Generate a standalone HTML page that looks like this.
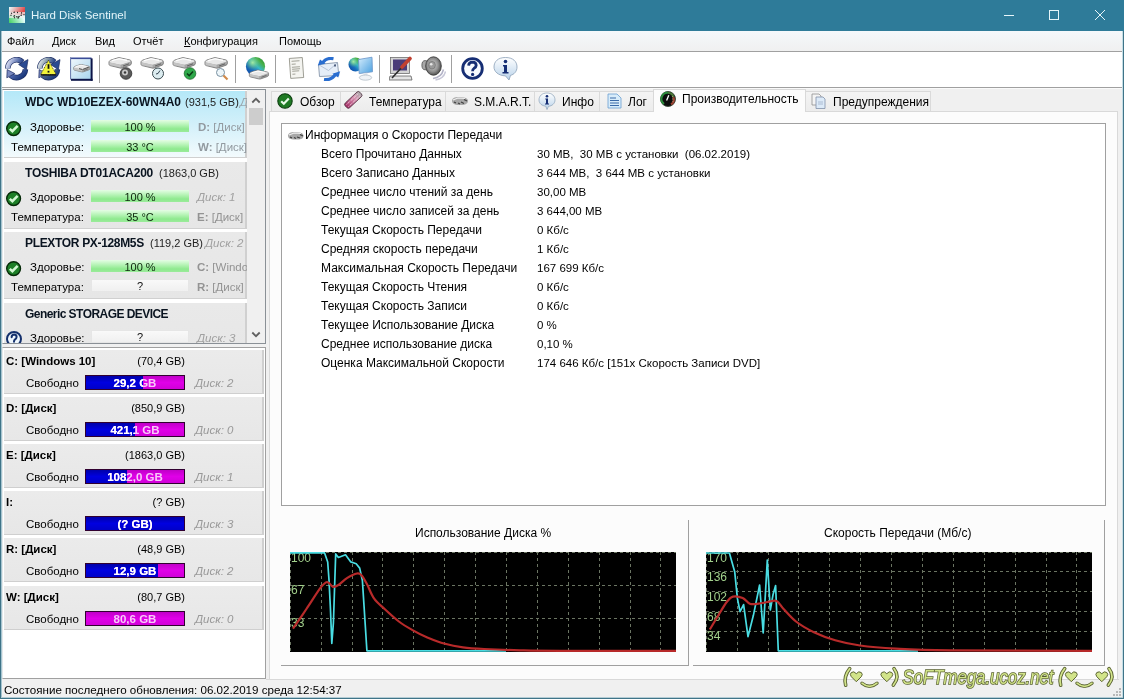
<!DOCTYPE html><html><head><meta charset="utf-8"><style>
*{margin:0;padding:0;box-sizing:border-box}
html,body{width:1124px;height:699px;overflow:hidden;background:#f0f0f0;-webkit-font-smoothing:antialiased;font-family:"Liberation Sans",sans-serif;font-size:12px;color:#000}
.a{position:absolute}
.t{position:absolute;white-space:nowrap;line-height:14px}
.g{color:#a2a2a2}
.it{font-style:italic}
.b{font-weight:bold}
.row{position:absolute;left:321px;white-space:nowrap;line-height:14px}
.val{position:absolute;left:537px;white-space:nowrap;line-height:14px;font-size:11.5px}
.di{position:absolute;left:4px;width:243px;height:67px;background:linear-gradient(#e9e9e9,#e6e6e6);box-shadow:inset -2px -1px 0 #d0d0d0}
.pi{position:absolute;left:4px;width:260px;height:44px;background:linear-gradient(#ebebeb,#e7e7e7);box-shadow:inset -2px -1px 0 #cfcfcf}
.hb{position:absolute;left:87px;width:98px;height:12px;background:linear-gradient(#e4fde4 0%,#b6f4b6 40%,#8ee98e 75%,#9beb9b 100%);text-align:center;font-size:11px;line-height:15px;color:#0c260c;overflow:hidden}
.eb{position:absolute;left:87px;width:98px;height:13px;background:linear-gradient(#fafafa,#efefef);box-shadow:inset 0 0 0 1px #e6e6e6;text-align:center;font-size:11px;line-height:15px;color:#111}
.pb{position:absolute;left:81px;top:25px;width:100px;height:15px;background:linear-gradient(#c000c8,#e000e8 50%,#d000d8);border:1px solid #300030;overflow:hidden}
.pbb{position:absolute;left:0;top:0;height:13px;background:linear-gradient(#0000a8,#0000e0 50%,#0000c8)}
.pbt{position:absolute;left:0;top:0;width:98px;height:13px;text-align:center;font-weight:bold;font-size:11.5px;line-height:15px;color:#fff;white-space:nowrap}
.tab{position:absolute;top:91px;height:21px;background:linear-gradient(#f5f5f5,#ececec);border:1px solid #d9d9d9;border-bottom:none}
</style></head><body><div id="root" style="position:absolute;left:0;top:0;width:1124px;height:699px;will-change:transform;background:#f0f0f0">
<div class="a" style="left:0px;top:0px;width:1124px;height:31px;background:#2e7b99;"></div>
<div class="t " style="left:31px;top:8px;font-size:11.5px;color:#e3f5fa">Hard Disk Sentinel</div>
<svg class="a" style="left:990px;top:0" width="134" height="31"><g stroke="#e6f6fa" stroke-width="1" fill="none"><line x1="1004" y1="15.5" x2="1014" y2="15.5" transform="translate(-990,0)"/><rect x="59.5" y="10.5" width="9" height="9"/><line x1="105" y1="10" x2="115" y2="20"/><line x1="115" y1="10" x2="105" y2="20"/></g></svg>
<div class="a" style="left:1px;top:31px;width:1122px;height:20px;background:linear-gradient(#f4f8fb,#f0f0f0);"></div>
<div class="a" style="left:1px;top:51px;width:1122px;height:1px;background:#a0a0a0;"></div>
<div class="t " style="left:7px;top:34px;font-size:11px">Файл</div>
<div class="t " style="left:52px;top:34px;font-size:11px">Диск</div>
<div class="t " style="left:95px;top:34px;font-size:11px">Вид</div>
<div class="t " style="left:133px;top:34px;font-size:11px">Отчёт</div>
<div class="t " style="left:184px;top:34px;font-size:11px"><u>К</u>онфигурация</div>
<div class="t " style="left:279px;top:34px;font-size:11px">Помощь</div>
<div class="a" style="left:1px;top:52px;width:1122px;height:35px;background:#fff;"></div>
<div class="a" style="left:1px;top:87px;width:1122px;height:1px;background:#a0a0a0;"></div>
<div class="a" style="left:1px;top:88px;width:1122px;height:1px;background:#fafafa;"></div>
<div class="a" style="left:99px;top:55px;width:1px;height:28px;background:#a0a0a0;"></div>
<div class="a" style="left:235px;top:55px;width:1px;height:28px;background:#a0a0a0;"></div>
<div class="a" style="left:275px;top:55px;width:1px;height:28px;background:#a0a0a0;"></div>
<div class="a" style="left:379px;top:55px;width:1px;height:28px;background:#a0a0a0;"></div>
<div class="a" style="left:451px;top:55px;width:1px;height:28px;background:#a0a0a0;"></div>
<div class="a" style="left:1px;top:31px;width:1px;height:667px;background:#a4c4d0;"></div>
<div class="a" style="left:0px;top:31px;width:1px;height:668px;background:#3f7488;"></div>
<div class="a" style="left:1122px;top:31px;width:1px;height:667px;background:#c4dde5;"></div>
<div class="a" style="left:1123px;top:31px;width:1px;height:668px;background:#3f7488;"></div>
<div class="a" style="left:0px;top:698px;width:1124px;height:1px;background:#3f7488;"></div>
<div class="a" style="left:1px;top:697px;width:1122px;height:1px;background:#b4ccd4;"></div>
<div class="a" style="left:266px;top:679px;width:853px;height:1px;background:#d9d9d9;"></div>
<div class="t " style="left:4px;top:683px;font-size:11.6px">Состояние последнего обновления: 06.02.2019 среда 12:54:37</div>
<div class="a" style="left:2px;top:89px;width:264px;height:255px;background:#fff;border:1px solid #8a9096;border-left-color:#e4e8ea"></div>
<div class="di" style="top:91px;background:linear-gradient(#b4e8f8,#d6f1fa 55%,#f4fbfd);overflow:hidden">
<div class="t b" style="left:21px;top:4px;font-size:12px;color:#0a1420;letter-spacing:0px">WDC WD10EZEX-60WN4A0</div>
<div class="t" style="left:181px;top:4px;font-size:11px;color:#222">(931,5 GB)</div>
<div class="t" style="left:236px;top:4px;font-size:11.5px;color:#9aa6ad;font-style:italic">Д</div>
<svg class="a" style="left:2px;top:29.5px" width="16" height="16" viewBox="0 0 16 16"><circle cx="7.6" cy="7.6" r="6.9" fill="#1d7f27" stroke="#052a08" stroke-width="1.4"/><path d="M3.8 7.8 L6.4 10.2 L11.6 4.8" stroke="#d4f8d4" stroke-width="2.5" fill="none"/></svg>
<div class="t" style="left:26px;top:29px;font-size:11.5px;">Здоровье:</div>
<div class="hb" style="top:29px">100 %</div>
<div class="t" style="left:194px;top:29px;font-size:11.5px;color:#929aa0"><b>D:</b> [Диск]</div>
<div class="t" style="left:7px;top:49px;font-size:11.5px;">Температура:</div>
<div class="hb" style="top:49px">33 °C</div>
<div class="t" style="left:194px;top:49px;font-size:11.5px;color:#929aa0"><b>W:</b> [Диск]</div>
</div>
<div class="di" style="top:162px;background:linear-gradient(#e9e9e9,#e6e6e6);overflow:hidden">
<div class="t b" style="left:21px;top:4px;font-size:12px;color:#0a1420;letter-spacing:-0.22px">TOSHIBA DT01ACA200</div>
<div class="t" style="left:155px;top:4px;font-size:11px;color:#222">(1863,0 GB)</div>
<svg class="a" style="left:2px;top:28.5px" width="16" height="16" viewBox="0 0 16 16"><circle cx="7.6" cy="7.6" r="6.9" fill="#1d7f27" stroke="#052a08" stroke-width="1.4"/><path d="M3.8 7.8 L6.4 10.2 L11.6 4.8" stroke="#d4f8d4" stroke-width="2.5" fill="none"/></svg>
<div class="t" style="left:26px;top:28px;font-size:11.5px;">Здоровье:</div>
<div class="hb" style="top:28px">100 %</div>
<div class="t" style="left:193px;top:28px;font-size:11.5px;color:#a0a0a0;font-style:italic">Диск: 1</div>
<div class="t" style="left:7px;top:48px;font-size:11.5px;">Температура:</div>
<div class="hb" style="top:48px">35 °C</div>
<div class="t" style="left:193px;top:48px;font-size:11.5px;color:#939393"><b>E:</b> [Диск]</div>
</div>
<div class="di" style="top:232px;background:linear-gradient(#e9e9e9,#e6e6e6);overflow:hidden">
<div class="t b" style="left:21px;top:4px;font-size:12px;color:#0a1420;letter-spacing:-0.33px">PLEXTOR PX-128M5S</div>
<div class="t" style="left:146px;top:4px;font-size:11px;color:#222">(119,2 GB)</div>
<div class="t" style="left:201px;top:4px;font-size:11.5px;color:#a0a0a0;font-style:italic">Диск: 2</div>
<svg class="a" style="left:2px;top:28.5px" width="16" height="16" viewBox="0 0 16 16"><circle cx="7.6" cy="7.6" r="6.9" fill="#1d7f27" stroke="#052a08" stroke-width="1.4"/><path d="M3.8 7.8 L6.4 10.2 L11.6 4.8" stroke="#d4f8d4" stroke-width="2.5" fill="none"/></svg>
<div class="t" style="left:26px;top:28px;font-size:11.5px;">Здоровье:</div>
<div class="hb" style="top:28px">100 %</div>
<div class="t" style="left:193px;top:28px;font-size:11.5px;color:#939393"><b>C:</b> [Windows</div>
<div class="t" style="left:7px;top:48px;font-size:11.5px;">Температура:</div>
<div class="eb" style="top:47px">?</div>
<div class="t" style="left:193px;top:48px;font-size:11.5px;color:#939393"><b>R:</b> [Диск]</div>
</div>
<div class="di" style="top:303px;background:linear-gradient(#e9e9e9,#e6e6e6);overflow:hidden">
<div class="t b" style="left:21px;top:4px;font-size:12px;color:#0a1420;letter-spacing:-0.55px">Generic STORAGE DEVICE</div>
<div class="t" style="left:-4px;top:4px;font-size:11px;color:#222"></div>
<svg class="a" style="left:2px;top:28px" width="18" height="16" viewBox="0 0 18 16"><circle cx="8" cy="8" r="7" fill="#eef6fc" stroke="#14306c" stroke-width="2"/><path d="M5.6 6.2 Q5.8 3.6 8.2 3.6 Q10.6 3.7 10.6 6 Q10.5 7.6 8.8 8.6 Q8 9.2 8 10.8" stroke="#14306c" stroke-width="2" fill="none" stroke-linecap="round"/><circle cx="8" cy="13" r="1.1" fill="#14306c"/></svg>
<div class="t" style="left:26px;top:28px;font-size:11.5px;">Здоровье:</div>
<div class="eb" style="top:27px">?</div>
<div class="t" style="left:193px;top:28px;font-size:11.5px;color:#a0a0a0;font-style:italic">Диск: 3</div>
</div>
<div class="a" style="left:3px;top:343px;width:263px;height:1px;background:#8a9096;"></div>
<div class="a" style="left:0px;top:344px;width:268px;height:3px;background:#f0f0f0;"></div>
<div class="a" style="left:0px;top:344px;width:1px;height:3px;background:#3f7488;"></div>
<div class="a" style="left:1px;top:344px;width:1px;height:3px;background:#a4c4d0;"></div>
<div class="a" style="left:247px;top:90px;width:18px;height:253px;background:#f0f0f0;"></div>
<div class="a" style="left:249px;top:108px;width:14px;height:17px;background:#cdcdcd;"></div>
<svg class="a" style="left:247px;top:90px" width="18" height="253"><path d="M5.3 12.5 L9 8.8 L12.7 12.5" stroke="#606060" stroke-width="1.8" fill="none"/><path d="M5.3 242.5 L9 246.2 L12.7 242.5" stroke="#606060" stroke-width="1.8" fill="none"/></svg>
<div class="a" style="left:2px;top:347px;width:264px;height:332px;background:#fff;border:1px solid #a0a0a0;border-left-color:#e4e8ea"></div>
<div class="pi" style="top:350px">
<div class="t b" style="left:2px;top:4px;font-size:11.5px">C: [Windows 10]</div>
<div class="t" style="left:0;width:181px;text-align:right;top:4px;font-size:11px">(70,4 GB)</div>
<div class="t" style="left:22px;top:26px;font-size:11.5px">Свободно</div>
<div class="pb"><div class="pbb" style="width:57px"></div><div class="pbt" style="color:#f8c8f8">29,2 GB</div><div class="a" style="left:0;top:0;width:57px;height:13px;overflow:hidden"><div class="pbt">29,2 GB</div></div></div>
<div class="t it" style="left:191px;top:26px;font-size:11.5px;color:#999">Диск: 2</div>
</div>
<div class="pi" style="top:397px">
<div class="t b" style="left:2px;top:4px;font-size:11.5px">D: [Диск]</div>
<div class="t" style="left:0;width:181px;text-align:right;top:4px;font-size:11px">(850,9 GB)</div>
<div class="t" style="left:22px;top:26px;font-size:11.5px">Свободно</div>
<div class="pb"><div class="pbb" style="width:49px"></div><div class="pbt" style="color:#f8c8f8">421,1 GB</div><div class="a" style="left:0;top:0;width:49px;height:13px;overflow:hidden"><div class="pbt">421,1 GB</div></div></div>
<div class="t it" style="left:191px;top:26px;font-size:11.5px;color:#999">Диск: 0</div>
</div>
<div class="pi" style="top:444px">
<div class="t b" style="left:2px;top:4px;font-size:11.5px">E: [Диск]</div>
<div class="t" style="left:0;width:181px;text-align:right;top:4px;font-size:11px">(1863,0 GB)</div>
<div class="t" style="left:22px;top:26px;font-size:11.5px">Свободно</div>
<div class="pb"><div class="pbb" style="width:41px"></div><div class="pbt" style="color:#f8c8f8">1082,0 GB</div><div class="a" style="left:0;top:0;width:41px;height:13px;overflow:hidden"><div class="pbt">1082,0 GB</div></div></div>
<div class="t it" style="left:191px;top:26px;font-size:11.5px;color:#999">Диск: 1</div>
</div>
<div class="pi" style="top:491px">
<div class="t b" style="left:2px;top:4px;font-size:11.5px">I:</div>
<div class="t" style="left:0;width:181px;text-align:right;top:4px;font-size:11px">(? GB)</div>
<div class="t" style="left:22px;top:26px;font-size:11.5px">Свободно</div>
<div class="pb"><div class="pbb" style="width:98px"></div><div class="pbt" style="color:#f8c8f8">(? GB)</div><div class="a" style="left:0;top:0;width:98px;height:13px;overflow:hidden"><div class="pbt">(? GB)</div></div></div>
<div class="t it" style="left:191px;top:26px;font-size:11.5px;color:#999">Диск: 3</div>
</div>
<div class="pi" style="top:538px">
<div class="t b" style="left:2px;top:4px;font-size:11.5px">R: [Диск]</div>
<div class="t" style="left:0;width:181px;text-align:right;top:4px;font-size:11px">(48,9 GB)</div>
<div class="t" style="left:22px;top:26px;font-size:11.5px">Свободно</div>
<div class="pb"><div class="pbb" style="width:72px"></div><div class="pbt" style="color:#f8c8f8">12,9 GB</div><div class="a" style="left:0;top:0;width:72px;height:13px;overflow:hidden"><div class="pbt">12,9 GB</div></div></div>
<div class="t it" style="left:191px;top:26px;font-size:11.5px;color:#999">Диск: 2</div>
</div>
<div class="pi" style="top:586px">
<div class="t b" style="left:2px;top:4px;font-size:11.5px">W: [Диск]</div>
<div class="t" style="left:0;width:181px;text-align:right;top:4px;font-size:11px">(80,7 GB)</div>
<div class="t" style="left:22px;top:26px;font-size:11.5px">Свободно</div>
<div class="pb"><div class="pbb" style="width:0px"></div><div class="pbt" style="color:#f8c8f8">80,6 GB</div><div class="a" style="left:0;top:0;width:0px;height:13px;overflow:hidden"><div class="pbt">80,6 GB</div></div></div>
<div class="t it" style="left:191px;top:26px;font-size:11.5px;color:#999">Диск: 0</div>
</div>
<div class="a" style="left:269px;top:111px;width:849px;height:569px;background:#fcfcfc;border:1px solid #d9d9d9"></div>
<div class="a" style="left:281px;top:123px;width:825px;height:383px;background:#fff;border:1px solid #a0a0a0"></div>
<div class="t " style="left:305px;top:128px;">Информация о Скорости Передачи</div>
<div class="row" style="top:147px">Всего Прочитано Данных</div><div class="val" style="top:147px">30 MB,&nbsp; 30 MB с установки&nbsp; (06.02.2019)</div>
<div class="row" style="top:166px">Всего Записано Данных</div><div class="val" style="top:166px">3 644 MB,&nbsp; 3 644 MB с установки</div>
<div class="row" style="top:185px">Среднее число чтений за день</div><div class="val" style="top:185px">30,00 MB</div>
<div class="row" style="top:204px">Среднее число записей за день</div><div class="val" style="top:204px">3 644,00 MB</div>
<div class="row" style="top:223px">Текущая Скорость Передачи</div><div class="val" style="top:223px">0 Кб/с</div>
<div class="row" style="top:242px">Средняя скорость передачи</div><div class="val" style="top:242px">1 Кб/с</div>
<div class="row" style="top:261px">Максимальная Скорость Передачи</div><div class="val" style="top:261px">167 699 Кб/с</div>
<div class="row" style="top:280px">Текущая Скорость Чтения</div><div class="val" style="top:280px">0 Кб/с</div>
<div class="row" style="top:299px">Текущая Скорость Записи</div><div class="val" style="top:299px">0 Кб/с</div>
<div class="row" style="top:318px">Текущее Использование Диска</div><div class="val" style="top:318px">0 %</div>
<div class="row" style="top:337px">Среднее использование диска</div><div class="val" style="top:337px">0,10 %</div>
<div class="row" style="top:356px">Оценка Максимальной Скорости</div><div class="val" style="top:356px">174 646 Кб/с [151x Скорость Записи DVD]</div>
<div class="a" style="left:688px;top:520px;width:1px;height:146px;background:#a0a0a0;"></div>
<div class="a" style="left:281px;top:665px;width:408px;height:1px;background:#a0a0a0;"></div>
<div class="a" style="left:1104px;top:520px;width:1px;height:146px;background:#a0a0a0;"></div>
<div class="a" style="left:693px;top:665px;width:412px;height:1px;background:#a0a0a0;"></div>
<div class="t " style="left:415px;top:526px;">Использование Диска %</div>
<div class="t " style="left:824px;top:526px;">Скорость Передачи (Мб/с)</div>
<svg class="a" style="left:290px;top:552px" width="386" height="100" viewBox="290 552 386 100"><rect x="290" y="552" width="386" height="100" fill="#000"/><line x1="290" y1="552.5" x2="676" y2="552.5" stroke="#6a7462" stroke-width="1" stroke-dasharray="3 3" fill="none"/><line x1="290.5" y1="552" x2="290.5" y2="652" stroke="#6a7462" stroke-width="1" stroke-dasharray="3 3" fill="none"/><line x1="321.5" y1="552" x2="321.5" y2="652" stroke="#6a7462" stroke-width="1" stroke-dasharray="3 3" fill="none"/><line x1="352.5" y1="552" x2="352.5" y2="652" stroke="#6a7462" stroke-width="1" stroke-dasharray="3 3" fill="none"/><line x1="382.5" y1="552" x2="382.5" y2="652" stroke="#6a7462" stroke-width="1" stroke-dasharray="3 3" fill="none"/><line x1="413.5" y1="552" x2="413.5" y2="652" stroke="#6a7462" stroke-width="1" stroke-dasharray="3 3" fill="none"/><line x1="444.5" y1="552" x2="444.5" y2="652" stroke="#6a7462" stroke-width="1" stroke-dasharray="3 3" fill="none"/><line x1="475.5" y1="552" x2="475.5" y2="652" stroke="#6a7462" stroke-width="1" stroke-dasharray="3 3" fill="none"/><line x1="506.5" y1="552" x2="506.5" y2="652" stroke="#6a7462" stroke-width="1" stroke-dasharray="3 3" fill="none"/><line x1="537.5" y1="552" x2="537.5" y2="652" stroke="#6a7462" stroke-width="1" stroke-dasharray="3 3" fill="none"/><line x1="568.5" y1="552" x2="568.5" y2="652" stroke="#6a7462" stroke-width="1" stroke-dasharray="3 3" fill="none"/><line x1="599.5" y1="552" x2="599.5" y2="652" stroke="#6a7462" stroke-width="1" stroke-dasharray="3 3" fill="none"/><line x1="630.5" y1="552" x2="630.5" y2="652" stroke="#6a7462" stroke-width="1" stroke-dasharray="3 3" fill="none"/><line x1="660.5" y1="552" x2="660.5" y2="652" stroke="#6a7462" stroke-width="1" stroke-dasharray="3 3" fill="none"/><line x1="290" y1="585.5" x2="676" y2="585.5" stroke="#6a7462" stroke-width="1" stroke-dasharray="3 3" fill="none"/><line x1="290" y1="618.5" x2="676" y2="618.5" stroke="#6a7462" stroke-width="1" stroke-dasharray="3 3" fill="none"/><text x="291" y="562" font-family="Liberation Sans" font-size="12" fill="#a2d08c">100</text><text x="291" y="594" font-family="Liberation Sans" font-size="12" fill="#a2d08c">67</text><text x="291" y="627" font-family="Liberation Sans" font-size="12" fill="#a2d08c">33</text><polyline points="290,552.8 324.5,552.8 327.7,562 329,580 330.5,610 331.8,643.5 333.4,623 334.5,590 335.7,553.9 338.4,557.5 345.5,554.8 350.8,561.9 356.2,563.7 359.7,568.1 362.4,580.6 366.9,650.8 506,650.8" stroke="#49dde3" stroke-width="1.7" fill="none" stroke-linejoin="round"/><path d="M293,628.6 C295.2,625.3 301.8,615.8 306.4,609 C311.0,602.2 317.3,592.1 320.6,587.7 C323.9,583.3 324.6,583.2 326,582.4 C327.4,581.6 327.8,582.3 329,583 C330.2,583.7 331.4,586.5 333,586.8 C334.6,587.1 336.0,586.5 338.4,585 C340.8,583.5 344.2,579.8 347.3,577.9 C350.4,576.0 354.6,574.0 357,573.5 C359.4,573.0 359.9,573.5 361.5,575.2 C363.1,577.0 364.8,580.1 366.9,584 C369.0,587.9 371.1,594.2 374,598.4 C376.9,602.6 380.5,605.1 384.6,609 C388.8,612.9 394.2,617.9 398.9,621.5 C403.6,625.1 408.3,627.7 413,630.4 C417.7,633.1 422.0,635.3 427.3,637.5 C432.6,639.7 439.1,642.2 445,643.8 C450.9,645.4 456.4,646.4 463,647.3 C469.6,648.2 474.8,648.5 484.3,649 C493.8,649.5 507.4,650.0 520,650.3 C532.6,650.6 534.0,650.7 560,650.8 C586.0,650.9 656.7,650.8 676,650.8" stroke="#b82a2a" stroke-width="2.2" fill="none" stroke-linejoin="round"/></svg>
<svg class="a" style="left:706px;top:552px" width="386" height="100" viewBox="706 552 386 100"><rect x="706" y="552" width="386" height="100" fill="#000"/><line x1="706" y1="552.5" x2="1092" y2="552.5" stroke="#6a7462" stroke-width="1" stroke-dasharray="3 3" fill="none"/><line x1="706.5" y1="552" x2="706.5" y2="652" stroke="#6a7462" stroke-width="1" stroke-dasharray="3 3" fill="none"/><line x1="737.5" y1="552" x2="737.5" y2="652" stroke="#6a7462" stroke-width="1" stroke-dasharray="3 3" fill="none"/><line x1="768.5" y1="552" x2="768.5" y2="652" stroke="#6a7462" stroke-width="1" stroke-dasharray="3 3" fill="none"/><line x1="798.5" y1="552" x2="798.5" y2="652" stroke="#6a7462" stroke-width="1" stroke-dasharray="3 3" fill="none"/><line x1="829.5" y1="552" x2="829.5" y2="652" stroke="#6a7462" stroke-width="1" stroke-dasharray="3 3" fill="none"/><line x1="860.5" y1="552" x2="860.5" y2="652" stroke="#6a7462" stroke-width="1" stroke-dasharray="3 3" fill="none"/><line x1="891.5" y1="552" x2="891.5" y2="652" stroke="#6a7462" stroke-width="1" stroke-dasharray="3 3" fill="none"/><line x1="922.5" y1="552" x2="922.5" y2="652" stroke="#6a7462" stroke-width="1" stroke-dasharray="3 3" fill="none"/><line x1="953.5" y1="552" x2="953.5" y2="652" stroke="#6a7462" stroke-width="1" stroke-dasharray="3 3" fill="none"/><line x1="984.5" y1="552" x2="984.5" y2="652" stroke="#6a7462" stroke-width="1" stroke-dasharray="3 3" fill="none"/><line x1="1015.5" y1="552" x2="1015.5" y2="652" stroke="#6a7462" stroke-width="1" stroke-dasharray="3 3" fill="none"/><line x1="1046.5" y1="552" x2="1046.5" y2="652" stroke="#6a7462" stroke-width="1" stroke-dasharray="3 3" fill="none"/><line x1="1076.5" y1="552" x2="1076.5" y2="652" stroke="#6a7462" stroke-width="1" stroke-dasharray="3 3" fill="none"/><line x1="706" y1="571.5" x2="1092" y2="571.5" stroke="#6a7462" stroke-width="1" stroke-dasharray="3 3" fill="none"/><line x1="706" y1="591.5" x2="1092" y2="591.5" stroke="#6a7462" stroke-width="1" stroke-dasharray="3 3" fill="none"/><line x1="706" y1="611.5" x2="1092" y2="611.5" stroke="#6a7462" stroke-width="1" stroke-dasharray="3 3" fill="none"/><line x1="706" y1="631.5" x2="1092" y2="631.5" stroke="#6a7462" stroke-width="1" stroke-dasharray="3 3" fill="none"/><text x="707" y="562" font-family="Liberation Sans" font-size="12" fill="#a2d08c">170</text><text x="707" y="581" font-family="Liberation Sans" font-size="12" fill="#a2d08c">136</text><text x="707" y="601" font-family="Liberation Sans" font-size="12" fill="#a2d08c">102</text><text x="707" y="621" font-family="Liberation Sans" font-size="12" fill="#a2d08c">68</text><text x="707" y="640" font-family="Liberation Sans" font-size="12" fill="#a2d08c">34</text><polyline points="706,553 729.4,553 734.7,571.7 737.4,598.4 740,611.7 743.6,604.6 748,636.6 753.4,615.3 759.6,585 763.2,633 767.3,560.1 770.3,610 773,594.8 775.6,585.6 778.3,650.8 918,650.8" stroke="#49dde3" stroke-width="1.7" fill="none" stroke-linejoin="round"/><path d="M709.8,629.5 C711.1,627.3 715.0,620.8 717.8,616.2 C720.6,611.6 724.2,605.3 726.7,602 C729.2,598.7 730.2,597.3 732.9,596.6 C735.6,595.9 739.9,596.8 742.7,598 C745.5,599.2 747.1,602.8 749.8,603.7 C752.5,604.7 755.7,604.0 758.7,603.7 C761.7,603.4 764.6,602.5 767.6,602 C770.6,601.5 773.8,599.8 776.5,601 C779.2,602.2 780.4,605.6 783.6,609 C786.9,612.4 791.0,617.6 796,621.5 C801.0,625.4 807.4,629.1 813.9,632.2 C820.4,635.3 827.5,638.0 835.2,640.2 C842.9,642.4 849.9,644.1 860,645.5 C870.1,646.9 880.7,647.8 895.7,648.6 C910.7,649.4 917.3,649.9 950,650.3 C982.7,650.7 1068.3,650.7 1092,650.8" stroke="#b82a2a" stroke-width="2.2" fill="none" stroke-linejoin="round"/></svg>
<svg width="0" height="0" style="position:absolute"><defs>
<linearGradient id="gRef" x1="0" y1="0" x2="0" y2="1"><stop offset="0" stop-color="#b0c0dc"/><stop offset="0.45" stop-color="#4a68a4"/><stop offset="1" stop-color="#16285e"/></linearGradient>
<linearGradient id="gDiskTop" x1="0" y1="0" x2="0" y2="1"><stop offset="0" stop-color="#f4f4f4"/><stop offset="1" stop-color="#c4c4c4"/></linearGradient>
<linearGradient id="gDiskFront" x1="0" y1="0" x2="0" y2="1"><stop offset="0" stop-color="#9a9a9a"/><stop offset="1" stop-color="#d8d8d8"/></linearGradient>
<linearGradient id="gGlobe" x1="0" y1="1" x2="1" y2="0"><stop offset="0" stop-color="#0a3a98"/><stop offset="0.35" stop-color="#1a70c0"/><stop offset="0.55" stop-color="#38b8c8"/><stop offset="0.75" stop-color="#48b048"/><stop offset="1" stop-color="#1a7a30"/></linearGradient><radialGradient id="gGlobeH" cx="0.35" cy="0.3" r="0.4"><stop offset="0" stop-color="#b0f0a0" stop-opacity="0.9"/><stop offset="1" stop-color="#60c060" stop-opacity="0"/></radialGradient>
<linearGradient id="gWin" x1="0" y1="0" x2="1" y2="1"><stop offset="0" stop-color="#f2f8fc"/><stop offset="1" stop-color="#a8d4ee"/></linearGradient>
<linearGradient id="gBubble" x1="0" y1="0" x2="0" y2="1"><stop offset="0" stop-color="#ffffff"/><stop offset="1" stop-color="#b8d2ea"/></linearGradient>
<radialGradient id="gSpk" cx="0.4" cy="0.4" r="0.6"><stop offset="0" stop-color="#e8e8e8"/><stop offset="1" stop-color="#606060"/></radialGradient>
<linearGradient id="gMon" x1="0" y1="0" x2="1" y2="1"><stop offset="0" stop-color="#d4ecfc"/><stop offset="1" stop-color="#4aa0e0"/></linearGradient>
</defs></svg>
<svg class="a" style="left:5px;top:57px" width="24" height="24" viewBox="0 0 24 24"><defs><linearGradient id="gRT" x1="0" y1="0" x2="1" y2="0.3"><stop offset="0" stop-color="#e4e8f8"/><stop offset="0.45" stop-color="#8898c8"/><stop offset="1" stop-color="#24428a"/></linearGradient><linearGradient id="gRB" x1="0" y1="0" x2="1" y2="0.6"><stop offset="0" stop-color="#b8c4e8"/><stop offset="0.4" stop-color="#4a62a8"/><stop offset="1" stop-color="#1c3a7c"/></linearGradient></defs><path d="M2.8 11.6 A8.8 8.8 0 0 1 17.5 5" stroke="#26366a" stroke-width="5.6" fill="none"/><path d="M2.8 11.6 A8.8 8.8 0 0 1 17.5 5" stroke="url(#gRT)" stroke-width="4.2" fill="none"/><path d="M23 2.6 L21.4 12.8 L13.6 7.4 Z" fill="#2a4a92" stroke="#1a2a60" stroke-width="0.7"/><path d="M20.4 12.4 A8.8 8.8 0 0 1 5.8 18.4" stroke="#1c2c64" stroke-width="5.6" fill="none"/><path d="M20.4 12.4 A8.8 8.8 0 0 1 5.8 18.4" stroke="url(#gRB)" stroke-width="4.2" fill="none"/><path d="M2.2 12.6 L1.8 20.8 L9.8 16.6 Z" fill="#7a8ac0" stroke="#1a2a60" stroke-width="0.7"/></svg>
<svg class="a" style="left:37px;top:57px" width="24" height="24" viewBox="0 0 24 24"><defs><linearGradient id="gRT2" x1="0" y1="0" x2="1" y2="0.3"><stop offset="0" stop-color="#e8eef0"/><stop offset="0.45" stop-color="#8a9cac"/><stop offset="1" stop-color="#24428a"/></linearGradient><linearGradient id="gRB2" x1="0" y1="0" x2="1" y2="0.6"><stop offset="0" stop-color="#a8b8c8"/><stop offset="0.4" stop-color="#4a6088"/><stop offset="1" stop-color="#1c3a7c"/></linearGradient></defs><path d="M2.8 11.6 A8.8 8.8 0 0 1 17.5 5" stroke="#26366a" stroke-width="5.6" fill="none"/><path d="M2.8 11.6 A8.8 8.8 0 0 1 17.5 5" stroke="url(#gRT2)" stroke-width="4.2" fill="none"/><path d="M23 2.6 L21.4 12.8 L13.6 7.4 Z" fill="#2a4a92" stroke="#1a2a60" stroke-width="0.7"/><path d="M20.4 12.4 A8.8 8.8 0 0 1 5.8 18.4" stroke="#1c2c64" stroke-width="5.6" fill="none"/><path d="M20.4 12.4 A8.8 8.8 0 0 1 5.8 18.4" stroke="url(#gRB2)" stroke-width="4.2" fill="none"/><path d="M2.2 12.6 L1.8 20.8 L9.8 16.6 Z" fill="#7a8ac0" stroke="#1a2a60" stroke-width="0.7"/><path d="M11.4 3.2 L19.2 17.6 L3.6 17.6 Z" fill="#f2f23c" stroke="#3a3a18" stroke-width="0.9" stroke-dasharray="1 0.8" stroke-linejoin="round"/><rect x="3.8" y="17.2" width="15.2" height="1.4" fill="#1a1a10"/><rect x="10.6" y="7.2" width="1.8" height="4.6" fill="#111"/><rect x="10.6" y="13.8" width="1.8" height="1.8" fill="#111"/></svg>
<svg class="a" style="left:69px;top:56px" width="25" height="25" viewBox="0 0 25 25"><rect x="1.5" y="2" width="20.5" height="21" fill="url(#gWin)"/><rect x="1" y="1.5" width="21.5" height="1.6" fill="#3a4c98"/><rect x="1" y="1.5" width="1.1" height="22" fill="#7080b0"/><rect x="21.6" y="2.4" width="2" height="22.4" fill="#0c1448"/><rect x="2" y="22.8" width="21.6" height="2" fill="#0c1448"/><g transform="translate(4,8) scale(0.72)" stroke-linejoin="round"><path d="M1 4.8 Q1.5 3.6 3 3 L10 0.8 Q11 0.5 12 0.8 L22 3 Q23.3 3.5 23.3 4.5 L23.3 6.8 Q23.3 7.6 22 8.2 L14 11 Q13 11.3 12 11 L2.2 8.6 Q1 8.2 1 7.2 Z" fill="#9a9a9a" stroke="#7a7a7a" stroke-width="0.9"/><path d="M1.4 4.8 Q2 3.6 3.5 3.2 L10.5 1.2 Q11 1 12 1.2 L22.5 3.6 Q22.8 4.6 21.5 5.4 L14.5 7.6 Q13 8 11.8 7.7 L2.5 5.8 Q1.5 5.5 1.4 4.8 Z" fill="#e8e8e8"/><path d="M1.4 5.2 L12.6 7.8 L12.8 10.6 L2.2 8.2 Q1.4 7.8 1.4 7 Z" fill="#c4c4c4"/><path d="M13 7.8 L22.8 4.4 L22.9 6.8 L13.2 10.6 Z" fill="#a8a8a8"/><path d="M4 3.6 L11 1.8 L19 3.4" stroke="#ffffff" stroke-width="1.1" fill="none"/><path d="M15 9 L21 6.8" stroke="#5a5a5a" stroke-width="0.9"/></g><path d="M13.5 13.5 L20 11 M10 12.6 L13 13.4" stroke="#505050" stroke-width="1"/></svg>
<svg class="a" style="left:108px;top:56px" width="26" height="25" viewBox="0 0 26 25"><g transform="translate(0,1) scale(1.0)" stroke-linejoin="round"><path d="M1 4.8 Q1.5 3.6 3 3 L10 0.8 Q11 0.5 12 0.8 L22 3 Q23.3 3.5 23.3 4.5 L23.3 6.8 Q23.3 7.6 22 8.2 L14 11 Q13 11.3 12 11 L2.2 8.6 Q1 8.2 1 7.2 Z" fill="#9a9a9a" stroke="#7a7a7a" stroke-width="0.9"/><path d="M1.4 4.8 Q2 3.6 3.5 3.2 L10.5 1.2 Q11 1 12 1.2 L22.5 3.6 Q22.8 4.6 21.5 5.4 L14.5 7.6 Q13 8 11.8 7.7 L2.5 5.8 Q1.5 5.5 1.4 4.8 Z" fill="#e8e8e8"/><path d="M1.4 5.2 L12.6 7.8 L12.8 10.6 L2.2 8.2 Q1.4 7.8 1.4 7 Z" fill="#c4c4c4"/><path d="M13 7.8 L22.8 4.4 L22.9 6.8 L13.2 10.6 Z" fill="#a8a8a8"/><path d="M4 3.6 L11 1.8 L19 3.4" stroke="#ffffff" stroke-width="1.1" fill="none"/><path d="M15 9 L21 6.8" stroke="#5a5a5a" stroke-width="0.9"/></g><circle cx="18" cy="17.5" r="5.8" fill="#5a5a5a" stroke="#2a2a2a" stroke-width="0.8"/><circle cx="17" cy="16.5" r="3" fill="#c8c8c8"/><circle cx="17" cy="16.5" r="1.2" fill="#3a3a3a"/></svg>
<svg class="a" style="left:140px;top:56px" width="26" height="25" viewBox="0 0 26 25"><g transform="translate(0,1) scale(1.0)" stroke-linejoin="round"><path d="M1 4.8 Q1.5 3.6 3 3 L10 0.8 Q11 0.5 12 0.8 L22 3 Q23.3 3.5 23.3 4.5 L23.3 6.8 Q23.3 7.6 22 8.2 L14 11 Q13 11.3 12 11 L2.2 8.6 Q1 8.2 1 7.2 Z" fill="#9a9a9a" stroke="#7a7a7a" stroke-width="0.9"/><path d="M1.4 4.8 Q2 3.6 3.5 3.2 L10.5 1.2 Q11 1 12 1.2 L22.5 3.6 Q22.8 4.6 21.5 5.4 L14.5 7.6 Q13 8 11.8 7.7 L2.5 5.8 Q1.5 5.5 1.4 4.8 Z" fill="#e8e8e8"/><path d="M1.4 5.2 L12.6 7.8 L12.8 10.6 L2.2 8.2 Q1.4 7.8 1.4 7 Z" fill="#c4c4c4"/><path d="M13 7.8 L22.8 4.4 L22.9 6.8 L13.2 10.6 Z" fill="#a8a8a8"/><path d="M4 3.6 L11 1.8 L19 3.4" stroke="#ffffff" stroke-width="1.1" fill="none"/><path d="M15 9 L21 6.8" stroke="#5a5a5a" stroke-width="0.9"/></g><circle cx="18" cy="17.5" r="5.5" fill="#dcecf0" stroke="#3a4a50" stroke-width="1"/><path d="M18 17.5 L20 14.5 M18 17.5 L16 18" stroke="#203040" stroke-width="0.9"/></svg>
<svg class="a" style="left:172px;top:56px" width="26" height="25" viewBox="0 0 26 25"><g transform="translate(0,1) scale(1.0)" stroke-linejoin="round"><path d="M1 4.8 Q1.5 3.6 3 3 L10 0.8 Q11 0.5 12 0.8 L22 3 Q23.3 3.5 23.3 4.5 L23.3 6.8 Q23.3 7.6 22 8.2 L14 11 Q13 11.3 12 11 L2.2 8.6 Q1 8.2 1 7.2 Z" fill="#9a9a9a" stroke="#7a7a7a" stroke-width="0.9"/><path d="M1.4 4.8 Q2 3.6 3.5 3.2 L10.5 1.2 Q11 1 12 1.2 L22.5 3.6 Q22.8 4.6 21.5 5.4 L14.5 7.6 Q13 8 11.8 7.7 L2.5 5.8 Q1.5 5.5 1.4 4.8 Z" fill="#e8e8e8"/><path d="M1.4 5.2 L12.6 7.8 L12.8 10.6 L2.2 8.2 Q1.4 7.8 1.4 7 Z" fill="#c4c4c4"/><path d="M13 7.8 L22.8 4.4 L22.9 6.8 L13.2 10.6 Z" fill="#a8a8a8"/><path d="M4 3.6 L11 1.8 L19 3.4" stroke="#ffffff" stroke-width="1.1" fill="none"/><path d="M15 9 L21 6.8" stroke="#5a5a5a" stroke-width="0.9"/></g><circle cx="18" cy="17.5" r="5.8" fill="#2ea84a" stroke="#1a6a2a" stroke-width="0.8"/><path d="M15 17.5 L17.2 19.7 L21 15.5" stroke="#0c3a14" stroke-width="1.6" fill="none"/></svg>
<svg class="a" style="left:204px;top:56px" width="26" height="25" viewBox="0 0 26 25"><g transform="translate(0,1) scale(1.0)" stroke-linejoin="round"><path d="M1 4.8 Q1.5 3.6 3 3 L10 0.8 Q11 0.5 12 0.8 L22 3 Q23.3 3.5 23.3 4.5 L23.3 6.8 Q23.3 7.6 22 8.2 L14 11 Q13 11.3 12 11 L2.2 8.6 Q1 8.2 1 7.2 Z" fill="#9a9a9a" stroke="#7a7a7a" stroke-width="0.9"/><path d="M1.4 4.8 Q2 3.6 3.5 3.2 L10.5 1.2 Q11 1 12 1.2 L22.5 3.6 Q22.8 4.6 21.5 5.4 L14.5 7.6 Q13 8 11.8 7.7 L2.5 5.8 Q1.5 5.5 1.4 4.8 Z" fill="#e8e8e8"/><path d="M1.4 5.2 L12.6 7.8 L12.8 10.6 L2.2 8.2 Q1.4 7.8 1.4 7 Z" fill="#c4c4c4"/><path d="M13 7.8 L22.8 4.4 L22.9 6.8 L13.2 10.6 Z" fill="#a8a8a8"/><path d="M4 3.6 L11 1.8 L19 3.4" stroke="#ffffff" stroke-width="1.1" fill="none"/><path d="M15 9 L21 6.8" stroke="#5a5a5a" stroke-width="0.9"/></g><circle cx="16.5" cy="16.5" r="4" fill="#eef6fa" stroke="#7890a0" stroke-width="1"/><path d="M19.5 19.5 L23.5 23.5" stroke="#d08a4a" stroke-width="2.2"/></svg>
<svg class="a" style="left:244px;top:56px" width="26" height="25" viewBox="0 0 26 25"><circle cx="11.5" cy="10.5" r="9.6" fill="url(#gGlobe)"/><circle cx="11.5" cy="10.5" r="9.6" fill="url(#gGlobeH)"/><g transform="translate(4.5,13.5) scale(0.86)" stroke-linejoin="round"><path d="M1 4.8 Q1.5 3.6 3 3 L10 0.8 Q11 0.5 12 0.8 L22 3 Q23.3 3.5 23.3 4.5 L23.3 6.8 Q23.3 7.6 22 8.2 L14 11 Q13 11.3 12 11 L2.2 8.6 Q1 8.2 1 7.2 Z" fill="#9a9a9a" stroke="#7a7a7a" stroke-width="0.9"/><path d="M1.4 4.8 Q2 3.6 3.5 3.2 L10.5 1.2 Q11 1 12 1.2 L22.5 3.6 Q22.8 4.6 21.5 5.4 L14.5 7.6 Q13 8 11.8 7.7 L2.5 5.8 Q1.5 5.5 1.4 4.8 Z" fill="#e8e8e8"/><path d="M1.4 5.2 L12.6 7.8 L12.8 10.6 L2.2 8.2 Q1.4 7.8 1.4 7 Z" fill="#c4c4c4"/><path d="M13 7.8 L22.8 4.4 L22.9 6.8 L13.2 10.6 Z" fill="#a8a8a8"/><path d="M4 3.6 L11 1.8 L19 3.4" stroke="#ffffff" stroke-width="1.1" fill="none"/><path d="M15 9 L21 6.8" stroke="#5a5a5a" stroke-width="0.9"/></g></svg>
<svg class="a" style="left:288px;top:57px" width="17" height="23" viewBox="0 0 17 23"><g transform="rotate(-4 8 11)"><rect x="2" y="1" width="13" height="20" fill="#f4f4f0" stroke="#8a8a80" stroke-width="0.8"/><path d="M4 4 H12 M4 7 H8 M4 10 H12 M4 12 H12 M4 14 H11 M4 17 H7" stroke="#9a9a90" stroke-width="0.9"/></g></svg>
<svg class="a" style="left:317px;top:57px" width="24" height="24" viewBox="0 0 24 24"><path d="M1.5 7.5 L20.5 5.5 L21.8 18.5 L2.5 19.5 Z" fill="#e6eef8" stroke="#7a8aa0" stroke-width="0.8"/><path d="M1.8 7.8 L11.5 13.5 L20.5 5.8" stroke="#a0b0c8" stroke-width="0.7" fill="none"/><rect x="17" y="7.5" width="2" height="2" fill="#506080"/><path d="M16.5 1.8 Q9 0.2 5.2 6.5" stroke="#2a6ed0" stroke-width="3.2" fill="none"/><path d="M0.8 8.6 L3 2.6 L8.6 6.6 Z" fill="#2a6ed0"/><path d="M7 22.6 Q15 23.6 18.8 16.8" stroke="#2a6ed0" stroke-width="3.2" fill="none"/><path d="M23.2 14.2 L21.2 20.6 L15.4 16.8 Z" fill="#2a6ed0"/></svg>
<svg class="a" style="left:348px;top:56px" width="26" height="25" viewBox="0 0 26 25"><circle cx="7.5" cy="8.5" r="7" fill="url(#gGlobe)"/><circle cx="7.5" cy="8.5" r="7" fill="url(#gGlobeH)"/><path d="M10.5 3.5 L24 1.2 L24.5 15.8 L11.2 17.6 Z" fill="url(#gMon)" stroke="#6a94c8" stroke-width="0.8"/><path d="M15.5 17.2 L15.5 20 L19.5 20 L19.5 16.7 Z" fill="#dfe6ee"/><ellipse cx="17.5" cy="21.6" rx="6.2" ry="2.6" fill="#eef2f6" stroke="#aab6c2" stroke-width="0.7"/></svg>
<svg class="a" style="left:389px;top:56px" width="24" height="25" viewBox="0 0 24 25"><rect x="1.5" y="1.5" width="19" height="16" fill="#d4d4d4" stroke="#707070" stroke-width="0.8"/><rect x="4" y="3.5" width="14" height="11" fill="#4a3c78"/><path d="M1 20 L22 20 L23 24 L0 24 Z" fill="#e4e4e4" stroke="#606060" stroke-width="0.8"/><path d="M3 22 L14 10" stroke="#2a2a2a" stroke-width="1.6"/><path d="M13 11 L21 2.5" stroke="#c04030" stroke-width="3.6" stroke-linecap="round"/></svg>
<svg class="a" style="left:421px;top:56px" width="25" height="25" viewBox="0 0 25 25"><defs><radialGradient id="gCone" cx="0.45" cy="0.45" r="0.6"><stop offset="0" stop-color="#d8d8d8"/><stop offset="0.6" stop-color="#909090"/><stop offset="1" stop-color="#404040"/></radialGradient></defs><path d="M12 22.5 Q20.5 21.5 22.5 13.5" stroke="#b4b4c8" stroke-width="1.6" fill="none"/><path d="M14.5 24 Q23 22.5 24.5 15.5" stroke="#c8c8d8" stroke-width="1.4" fill="none"/><ellipse cx="4.2" cy="9.2" rx="3.3" ry="4.6" fill="#a8a8a8" stroke="#505050" stroke-width="0.8"/><ellipse cx="12.5" cy="10" rx="7.8" ry="9.2" fill="url(#gCone)" stroke="#404040" stroke-width="0.9"/><ellipse cx="11" cy="9.2" rx="3.4" ry="3.8" fill="#9a9a9a" stroke="#6a6a6a" stroke-width="0.6"/><circle cx="10.2" cy="8.2" r="1.3" fill="#e8e8e8"/></svg>
<svg class="a" style="left:461px;top:57px" width="24" height="23" viewBox="0 0 24 23"><circle cx="11.5" cy="11.5" r="9.8" fill="#f8fbff" stroke="#162e74" stroke-width="2.8"/><path d="M7.6 8.6 Q7.8 5.2 11.6 5.2 Q15.2 5.3 15.2 8.4 Q15.1 10.4 12.8 11.6 Q11.6 12.3 11.6 14.2" stroke="#162e74" stroke-width="2.8" fill="none"/><circle cx="11.6" cy="17.4" r="1.6" fill="#162e74"/></svg>
<svg class="a" style="left:493px;top:56px" width="25" height="25" viewBox="0 0 25 25"><path d="M12.5 1.5 C20 1.5 24 5.5 24 11 C24 15.5 21 18.5 17.5 19.4 L16 24 L12.5 19.9 C5 19.5 1 15.5 1 11 C1 5.5 5 1.5 12.5 1.5 Z" fill="url(#gBubble)" stroke="#8aa0b8" stroke-width="0.8"/><circle cx="12.5" cy="5.5" r="1.8" fill="#162e74"/><path d="M10 9 H14 V16 H15.5 V17.5 H9.5 V16 H11 V10.5 H10 Z" fill="#162e74"/></svg>
<svg class="a" style="left:9px;top:7px" width="16" height="16" viewBox="0 0 16 16"><defs><linearGradient id="gApp1" x1="0" y1="0" x2="1" y2="0.3"><stop offset="0" stop-color="#eaffff"/><stop offset="1" stop-color="#e04848"/></linearGradient><linearGradient id="gApp2" x1="0" y1="1" x2="1" y2="0.7"><stop offset="0" stop-color="#40d060"/><stop offset="1" stop-color="#e8ffff"/></linearGradient></defs><rect x="0" y="0" width="16" height="8" fill="url(#gApp1)"/><rect x="0" y="8" width="16" height="8" fill="url(#gApp2)"/><rect x="0" y="5" width="16" height="6" fill="#f0f0f0" opacity="0.7"/><path d="M2 6.5 L3 6 M4.5 5.5 L6 5 M8 5.5 L9 5.3 M12 5.8 L13 6 M1.5 8.5 L2.5 8 M4.5 9.5 L6 8.5 M7 10 L8.5 9.5 M9.5 10 L10.5 9 M11.5 8.5 L13 8 M14.5 7.5 L15.5 8 M5 11 L6 10.5 M8.5 11 L10 10.6" stroke="#202020" stroke-width="1.3"/></svg>
<div class="a" style="left:271px;top:91px;width:70px;height:20px;background:linear-gradient(#f4f4f4,#ececec);border:1px solid #dadada;border-bottom:none"></div>
<div class="a" style="left:340px;top:91px;width:106px;height:20px;background:linear-gradient(#f4f4f4,#ececec);border:1px solid #dadada;border-bottom:none"></div>
<div class="a" style="left:445px;top:91px;width:90px;height:20px;background:linear-gradient(#f4f4f4,#ececec);border:1px solid #dadada;border-bottom:none"></div>
<div class="a" style="left:534px;top:91px;width:66px;height:20px;background:linear-gradient(#f4f4f4,#ececec);border:1px solid #dadada;border-bottom:none"></div>
<div class="a" style="left:599px;top:91px;width:55px;height:20px;background:linear-gradient(#f4f4f4,#ececec);border:1px solid #dadada;border-bottom:none"></div>
<div class="a" style="left:805px;top:91px;width:126px;height:20px;background:linear-gradient(#f4f4f4,#ececec);border:1px solid #dadada;border-bottom:none"></div>
<div class="a" style="left:653px;top:89px;width:153px;height:23px;background:#fcfcfc;border:1px solid #d9d9d9;border-bottom:none"></div>
<div class="t " style="left:300px;top:94.5px;">Обзор</div>
<div class="t " style="left:369px;top:94.5px;">Температура</div>
<div class="t " style="left:474px;top:94.5px;">S.M.A.R.T.</div>
<div class="t " style="left:562px;top:94.5px;">Инфо</div>
<div class="t " style="left:628px;top:94.5px;">Лог</div>
<div class="t " style="left:833px;top:94.5px;">Предупреждения</div>
<div class="t " style="left:682px;top:92px;">Производительность</div>
<svg class="a" style="left:277px;top:93px" width="16" height="16" viewBox="0 0 16 16"><circle cx="8" cy="8" r="7.2" fill="#1f7a24" stroke="#0b3d0e" stroke-width="1.1"/><path d="M4.2 8.3 L6.8 10.8 L11.8 5.6" stroke="#e8fbe8" stroke-width="2.2" fill="none"/></svg>
<svg class="a" style="left:343px;top:90px" width="22" height="20" viewBox="0 0 22 20"><defs><linearGradient id="gTh" x1="0" y1="0" x2="1" y2="0"><stop offset="0" stop-color="#a02860"/><stop offset="0.6" stop-color="#d890b0"/><stop offset="1" stop-color="#b0b0b0"/></linearGradient></defs><g transform="translate(10.3,9.9) rotate(-43)"><rect x="-10" y="-3.2" width="20" height="6.4" rx="2" fill="url(#gTh)" stroke="#503040" stroke-width="0.8"/><path d="M-8 -1.2 H8 M-8 1.6 H8" stroke="#fff" stroke-width="0.8" stroke-dasharray="1 1"/></g></svg>
<svg class="a" style="left:451px;top:96px" width="18" height="10" viewBox="0 0 18 10"><path d="M1 4 Q2 1 7 1 L13 1.5 Q17 2 17 5 Q17 8 12 9 L6 9 Q1 8 1 5 Z" fill="#a8a8a8"/><path d="M2 4 L7 2 L14 2.5" stroke="#f0f0f0" stroke-width="1.2" fill="none"/><path d="M3 6 L5 7 M7 7 L9 8 M10 6 L13 7.5 M13 3.5 L16 5" stroke="#404040" stroke-width="1.3"/></svg>
<svg class="a" style="left:538px;top:92px" width="18" height="18" viewBox="0 0 18 18"><path d="M9 1 C14 1 17 4 17 8 C17 11.5 14 14 10.5 14.3 L9 17.5 L7.8 14.2 C4 13.8 1 11.5 1 8 C1 4 4 1 9 1 Z" fill="url(#gBubble)" stroke="#8aa0b8" stroke-width="0.7"/><circle cx="9" cy="4.3" r="1.3" fill="#162e74"/><path d="M7.3 6.5 H10 V11.5 H11 V12.6 H7 V11.5 H8 V7.6 H7.3 Z" fill="#162e74"/></svg>
<svg class="a" style="left:606px;top:93px" width="16" height="16" viewBox="0 0 16 16"><path d="M2 1 H11 L15 5 V15 H2 Z" fill="#d8ecfa" stroke="#6aa0d0" stroke-width="0.8"/><path d="M4 5 H10 M4 7.5 H13 M4 10 H13 M4 12.5 H13" stroke="#3a6aa8" stroke-width="1.1"/></svg>
<svg class="a" style="left:660px;top:90.5px" width="16" height="16" viewBox="0 0 16 16"><circle cx="8" cy="8" r="7.5" fill="#0c0c0c" stroke="#3a4a3a" stroke-width="0.9"/><path d="M8 1.8 A6.2 6.2 0 0 0 4 13" stroke="#2a8a3a" stroke-width="2" fill="none"/><path d="M8 1.8 A6.2 6.2 0 0 1 13.5 6" stroke="#4a7a3a" stroke-width="2" fill="none"/><path d="M13.5 6 A6.2 6.2 0 0 1 11 13.4" stroke="#9a4030" stroke-width="2" fill="none"/><path d="M12.4 5.2 L13 11" stroke="#d0c090" stroke-width="0.8" stroke-dasharray="0.8 0.8"/><path d="M6.6 9.6 L8.8 4.2" stroke="#fff" stroke-width="1.3"/></svg>
<svg class="a" style="left:811px;top:93px" width="15" height="16" viewBox="0 0 15 16"><path d="M1 1 H8 L10 3 V12 H1 Z" fill="#f4f4f4" stroke="#909090" stroke-width="0.8"/><path d="M5 4 H12 L14 6 V15.5 H5 Z" fill="#dceaf8" stroke="#8090a8" stroke-width="0.8"/><path d="M7 9 H12 M7 11 H12" stroke="#a0b0c8" stroke-width="0.8"/></svg>
<svg class="a" style="left:287px;top:131px" width="17" height="9" viewBox="0 0 17 9"><path d="M1 4 Q2 1 7 1 L13 1.5 Q16.5 2 16.5 5 Q16.5 8 12 8.5 L6 8.5 Q1 8 1 5 Z" fill="#a8a8a8"/><path d="M2 4 L7 2 L14 2.5" stroke="#f0f0f0" stroke-width="1.2" fill="none"/><path d="M3 6 L5 7 M7 6.5 L9 7.5 M10 6 L13 7 M13 3.5 L16 5" stroke="#404040" stroke-width="1.2"/></svg>
<div class="a" style="left:1119px;top:688px;width:2px;height:2px;background:#b8b8b8;"></div>
<div class="a" style="left:1116px;top:691px;width:2px;height:2px;background:#b8b8b8;"></div>
<div class="a" style="left:1119px;top:691px;width:2px;height:2px;background:#b8b8b8;"></div>
<div class="a" style="left:1113px;top:694px;width:2px;height:2px;background:#b8b8b8;"></div>
<div class="a" style="left:1116px;top:694px;width:2px;height:2px;background:#b8b8b8;"></div>
<div class="a" style="left:1119px;top:694px;width:2px;height:2px;background:#b8b8b8;"></div>
<svg class="a" style="left:835px;top:660px" width="289" height="36" viewBox="835 660 289 36"><path d="M849.7 668.6 Q843.3 676.5 845.7 685.2" stroke="#5c6434" stroke-width="3.6" fill="none" stroke-linecap="round"/><path d="M849.7 668.6 Q843.3 676.5 845.7 685.2" stroke="#d2e48a" stroke-width="1.7" fill="none" stroke-linecap="round"/><path d="M894.0 668.6 Q900.3 676.5 893.3 685.2" stroke="#5c6434" stroke-width="3.6" fill="none" stroke-linecap="round"/><path d="M894.0 668.6 Q900.3 676.5 893.3 685.2" stroke="#d2e48a" stroke-width="1.7" fill="none" stroke-linecap="round"/><path transform="translate(850.0,671.5)" d="M6.3 10.2 L1.3 5.2 Q-0.6 2.8 1.3 1 Q3.9 -0.9 6.3 2.2 Q8.7 -0.9 11.3 1 Q13.2 2.8 11.3 5.2 Z" fill="#d2e48a" stroke="#5c6434" stroke-width="1"/><path transform="translate(880.5,671.5)" d="M6.3 10.2 L1.3 5.2 Q-0.6 2.8 1.3 1 Q3.9 -0.9 6.3 2.2 Q8.7 -0.9 11.3 1 Q13.2 2.8 11.3 5.2 Z" fill="#d2e48a" stroke="#5c6434" stroke-width="1"/><path d="M862.0 683.2 Q869.5 689.5 877.0 683.2" stroke="#5c6434" stroke-width="3.4" fill="none" stroke-linecap="round"/><path d="M862.0 683.2 Q869.5 689.5 877.0 683.2" stroke="#d2e48a" stroke-width="1.6" fill="none" stroke-linecap="round"/><text x="902.5" y="684" font-family="Liberation Sans" font-style="italic" font-size="19.5" fill="#d2e48a" stroke="#58602f" stroke-width="1.6" paint-order="stroke" textLength="151" lengthAdjust="spacingAndGlyphs">SoFTmega.ucoz.net</text><path d="M1064.7 668.6 Q1058.3 676.5 1060.7 685.2" stroke="#5c6434" stroke-width="3.6" fill="none" stroke-linecap="round"/><path d="M1064.7 668.6 Q1058.3 676.5 1060.7 685.2" stroke="#d2e48a" stroke-width="1.7" fill="none" stroke-linecap="round"/><path d="M1109.0 668.6 Q1115.3 676.5 1108.3 685.2" stroke="#5c6434" stroke-width="3.6" fill="none" stroke-linecap="round"/><path d="M1109.0 668.6 Q1115.3 676.5 1108.3 685.2" stroke="#d2e48a" stroke-width="1.7" fill="none" stroke-linecap="round"/><path transform="translate(1065.0,671.5)" d="M6.3 10.2 L1.3 5.2 Q-0.6 2.8 1.3 1 Q3.9 -0.9 6.3 2.2 Q8.7 -0.9 11.3 1 Q13.2 2.8 11.3 5.2 Z" fill="#d2e48a" stroke="#5c6434" stroke-width="1"/><path transform="translate(1095.5,671.5)" d="M6.3 10.2 L1.3 5.2 Q-0.6 2.8 1.3 1 Q3.9 -0.9 6.3 2.2 Q8.7 -0.9 11.3 1 Q13.2 2.8 11.3 5.2 Z" fill="#d2e48a" stroke="#5c6434" stroke-width="1"/><path d="M1077.0 683.2 Q1084.5 689.5 1092.0 683.2" stroke="#5c6434" stroke-width="3.4" fill="none" stroke-linecap="round"/><path d="M1077.0 683.2 Q1084.5 689.5 1092.0 683.2" stroke="#d2e48a" stroke-width="1.6" fill="none" stroke-linecap="round"/></svg>
</div></body></html>
